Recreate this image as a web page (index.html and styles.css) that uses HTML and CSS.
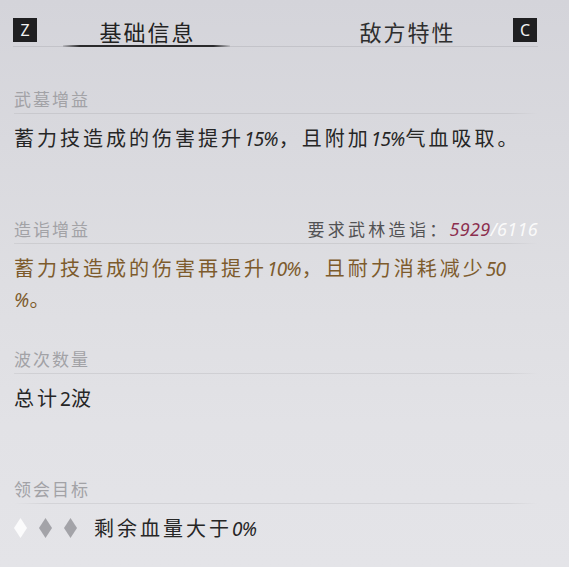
FILE: index.html
```html
<!DOCTYPE html>
<html lang="zh">
<head>
<meta charset="utf-8">
<title>基础信息</title>
<link rel="stylesheet" href="styles.css">
</head>
<body>
<div class="page">
  <header class="tabs">
    <span class="key key-left">Z</span>
    <span class="tab tab-active">基础信息</span>
    <span class="tab tab-second">敌方特性</span>
    <span class="key key-right">C</span>
  </header>

  <main class="sections">
    <section class="section">
      <div class="label-row"><span class="label">武墓增益</span></div>
      <div class="divider"></div>
      <p class="body">蓄力技造成的伤害提升<span class="num">15%</span>，且附加<span class="num">15%</span>气血吸取。</p>
    </section>

    <section class="section">
      <div class="label-row">
        <span class="label">造诣增益</span>
        <span class="require">要求武林造诣：<span class="req-num"><span class="cur">5929</span><span class="max">/6116</span></span></span>
      </div>
      <div class="divider"></div>
      <p class="body gold">蓄力技造成的伤害再提升<span class="num">10%</span>，且耐力消耗减少<span class="num">50</span><br><span class="num">%</span>。</p>
    </section>

    <section class="section">
      <div class="label-row"><span class="label">波次数量</span></div>
      <div class="divider"></div>
      <p class="body">总计<span class="num upright">2</span>波</p>
    </section>

    <section class="section section-last">
      <div class="label-row"><span class="label">领会目标</span></div>
      <div class="divider divider-soft"></div>
      <div class="body goal">
        <span class="diamonds">
          <svg class="diamond" width="13" height="20" viewBox="0 0 13 20"><polygon points="6.5,0 13,10 6.5,20 0,10" fill="#fbfbfc"/></svg>
          <svg class="diamond" width="13" height="20" viewBox="0 0 13 20"><polygon points="6.5,0 13,10 6.5,20 0,10" fill="#a3a3a8"/></svg>
          <svg class="diamond" width="13" height="20" viewBox="0 0 13 20"><polygon points="6.5,0 13,10 6.5,20 0,10" fill="#a3a3a8"/></svg>
        </span>
        <span class="goal-text">剩余血量大于<span class="num">0%</span></span>
      </div>
    </section>
  </main>
</div>
</body>
</html>
```

FILE: styles.css
```css
html, body {
  margin: 0;
  padding: 0;
}

body {
  width: 569px;
  height: 567px;
  overflow: hidden;
  background: linear-gradient(180deg, #d4d4da 0%, #d9d9de 25%, #dedee2 50%, #e2e2e6 75%, #e4e4e8 100%);
  font-family: "Noto Sans CJK SC", "Noto Sans", sans-serif;
  color: #262626;
}

.page {
  padding: 0 31px 0 13px;
}

/* ---------- header tabs ---------- */
.tabs {
  display: flex;
  align-items: flex-start;
  padding-top: 18px;
  height: 28px;
  border-bottom: 1px solid #c3c3c9;
}

.key {
  width: 24px;
  height: 24px;
  background: #1f1f21;
  color: #f2f2f2;
  font-family: "Noto Sans", "Liberation Sans", sans-serif;
  font-size: 16px;
  line-height: 24px;
  text-align: center;
}

.tab {
  width: 167px;
  height: 25px;
  padding-top: 1px;
  margin-bottom: -1px;
  padding-bottom: 3px;
  font-size: 22px;
  line-height: 24px;
  letter-spacing: 2px;
  text-indent: 2px;
  text-align: center;
  color: #222;
}

.tab-active {
  margin-left: 26px;
  background-image: linear-gradient(90deg, rgba(40,40,42,0.15) 0%, #2a2a2c 10%, #2a2a2c 90%, rgba(40,40,42,0.1) 100%);
  background-size: 100% 2px;
  background-position: bottom;
  background-repeat: no-repeat;
}

.tab-second {
  margin-left: 93px;
  color: #2e2e2e;
}

.key-right {
  margin-left: 23px;
}

/* ---------- sections ---------- */
.sections {
  padding-top: 40px;
  padding-left: 1px;
}

.section {
  height: 130px;
}

.section-last {
  height: auto;
}

.label-row {
  display: flex;
  justify-content: space-between;
  align-items: center;
  height: 24px;
  padding-bottom: 2px;
}

.label {
  font-size: 17px;
  letter-spacing: 2px;
  color: #a2a2a6;
  line-height: 24px;
}

.require {
  font-size: 17px;
  letter-spacing: 3.3px;
  color: #525254;
  line-height: 24px;
}

.req-num {
  font-family: "Noto Sans", sans-serif;
  font-style: italic;
  font-size: 18px;
  letter-spacing: 0.3px;
}

.cur {
  color: #8c2f4f;
}

.max {
  color: #fafafa;
}

.divider {
  height: 1px;
  background: linear-gradient(90deg, rgba(0,0,0,0.06) 0%, rgba(0,0,0,0.075) 3%, rgba(0,0,0,0.075) 94%, rgba(0,0,0,0) 100%);
}

.divider-soft {
  background: linear-gradient(90deg, rgba(0,0,0,0) 0%, rgba(0,0,0,0.07) 6%, rgba(0,0,0,0.07) 94%, rgba(0,0,0,0) 100%);
}

.body {
  margin: 9px 0 0 0;
  font-size: 20px;
  line-height: 30px;
  letter-spacing: 3px;
  color: #262626;
}

.gold {
  color: #7d5b2c;
}

.num {
  font-family: "Noto Sans", sans-serif;
  font-style: italic;
  font-size: 19px;
  letter-spacing: -0.8px;
  margin-right: 1px;
}

.upright {
  font-style: normal;
  font-size: 19px;
}

.goal {
  display: flex;
  align-items: center;
  height: 30px;
}

.diamonds {
  display: flex;
  align-items: center;
  gap: 12px;
  margin-right: 17px;
}

.diamond {
  display: block;
}
```
